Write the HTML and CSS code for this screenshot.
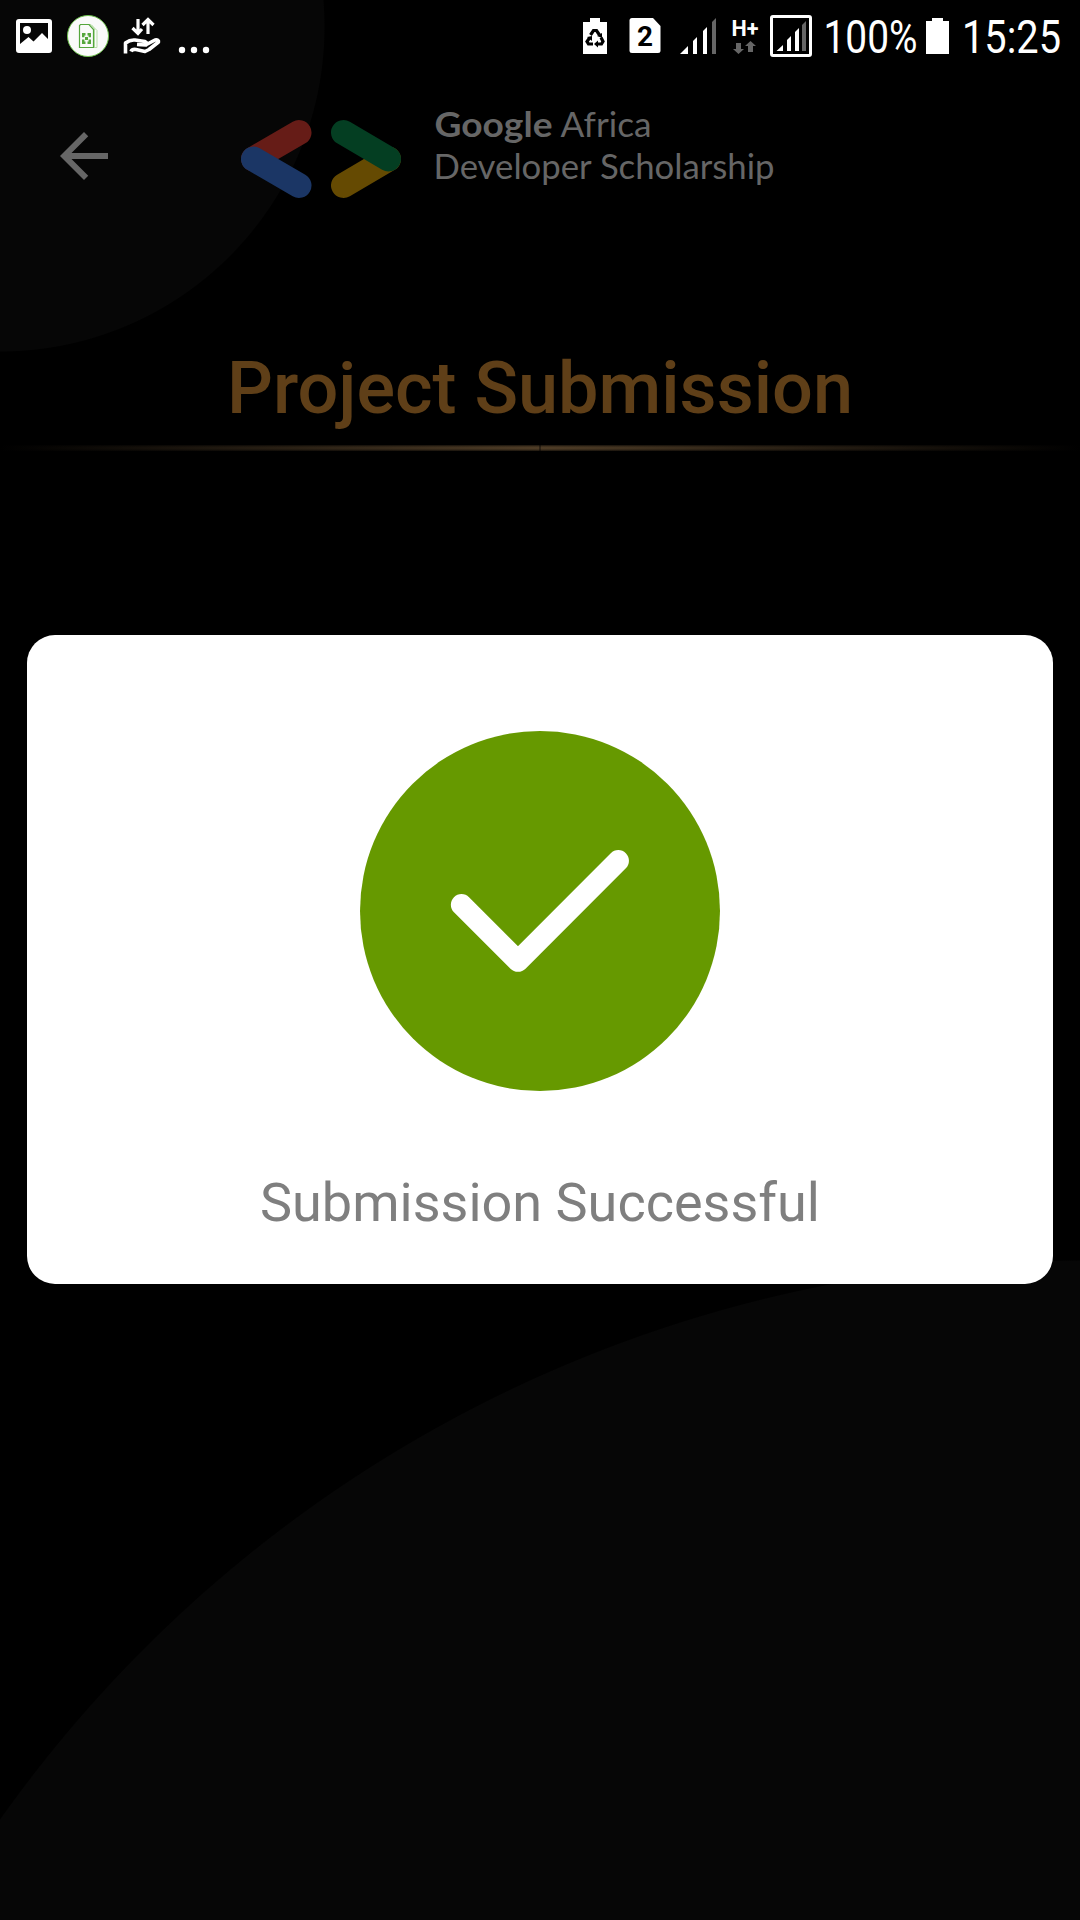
FILE: index.html
```html
<!DOCTYPE html>
<html lang="en">
<head>
<meta charset="utf-8">
<title>Project Submission</title>
<link rel="stylesheet" href="styles.css">
</head>
<body>
<div class="screen">
  <div class="status">
    <div class="status-group">
      <svg width="60" height="72" viewBox="0 0 60 72"><path fill="#fff" fill-rule="evenodd" d="M19 19H49Q52 19 52 22V50Q52 53 49 53H19Q16 53 16 50V22Q16 19 19 19ZM20 23V44L28.500 37L33.500 41.500L42 33L48 39V23Z"/><circle cx="27" cy="30" r="4" fill="#fff"/></svg>
      <svg width="56" height="72" viewBox="60 0 56 72"><circle cx="88" cy="36" r="20.500" fill="#fafafa" stroke="#6cbf4b"/><path fill="none" stroke="#b9dfaa" d="M89 24.500h2l6 6V47.500h-4M91.500 25l3 4V47"/><path fill="none" stroke="#55a63c" stroke-width="1.200" d="M80.500 24.500h8.500l4.500 5V47.500H79.500V25.500z"/><g fill="none" stroke="#55a63c" stroke-width="2.400"><path d="M85.500 34.200h-2.300v3M87.500 34.200h2.300v3M83.200 39.500v3.300h2.300M89.800 39.500v3.300h-2.300"/></g><path d="M85 37h3v3h-3z" fill="#55a63c"/></svg>
      <svg width="52" height="72" viewBox="116 0 52 72"><path fill="none" stroke="#fff" stroke-width="3.200" d="M138 19V32M132.500 28L138 33.500L142 29M148 34V20M142.500 25L148 19.500L153.500 25"/><path fill="none" stroke="#fff" stroke-width="3.600" stroke-linejoin="round" d="M125.500 53.500V43Q130 39.500 135 40L145 41.500Q148 43 146 45L137 44.500M146.500 44.500L155 40Q159 39.500 158.500 42L149 49.500L145 51.500L136 49.500Q132 49 131 51.500"/></svg>
      <svg width="52" height="72" viewBox="168 0 52 72"><g fill="#fff"><circle cx="182" cy="50" r="3.200"/><circle cx="194" cy="50" r="3.200"/><circle cx="206" cy="50" r="3.200"/></g></svg>
    </div>
    <div class="status-group">
      <svg width="43" height="72" viewBox="575 0 43 72"><path fill="#fff" d="M590 18h10v4h7V54H583V22h7z"/><g fill="none" stroke="#000" stroke-width="3.200"><path d="M590.500 35L593.500 30.500H596.500L599.500 35M601 37.500L603 41.500L601.500 44H597M593 44H588.500L587 41.500L589.500 38"/></g><path d="M602 33v5l-5-2zM598 40.500v7l-4-3.500zM587 37l5-1v5z"/></svg>
      <svg width="52" height="72" viewBox="618 0 52 72"><path fill="#fff" d="M632 18H653L660.500 26V50.500Q660.500 53 658 53H632Q629.500 53 629.500 50.500V20.500Q629.500 18 632 18Z"/><text x="637" y="46" class="sim-number" textLength="16" lengthAdjust="spacingAndGlyphs">2</text></svg>
      <svg width="54" height="72" viewBox="670 0 54 72"><path fill="#fff" d="M680 54L688 46V54ZM693 41L697 37V54H693ZM703 31L707 27V54H703Z"/><path fill="#666" d="M712 22L716 18V54H712Z"/></svg>
      <svg width="40" height="72" viewBox="724 0 40 72"><text x="731.500" y="36" class="network" textLength="27" lengthAdjust="spacingAndGlyphs">H+</text><path fill="#666" d="M736 43h5v6h3l-5.500 5-5.500-5h3zM748 52h5v-6h3l-5.500-5-5.500 5h3z"/></svg>
      <svg width="54" height="72" viewBox="764 0 54 72"><rect x="771.500" y="16.500" width="39" height="39" rx="1.500" fill="none" stroke="#fff" stroke-width="3"/><path fill="#fff" d="M776.500 51L783 45V51ZM787 40L791 36V51H787ZM795 32L799 28V51H795Z"/><path fill="#666" d="M802 25L806 21V51H802Z"/></svg>
      <svg width="104" height="72" viewBox="818 0 104 72"><text x="823.500" y="53" class="status-text" textLength="94" lengthAdjust="spacingAndGlyphs">100%</text></svg>
      <svg width="34" height="72" viewBox="922 0 34 72"><path fill="#fff" d="M932 18h11v3h6V54H926V21h6z"/></svg>
      <svg width="124" height="72" viewBox="956 0 124 72"><text x="962" y="53" class="status-text" textLength="99" lengthAdjust="spacingAndGlyphs">15:25</text></svg>
    </div>
  </div>
  <header class="header">
    <svg class="back" width="72" height="72" viewBox="0 0 24 24"><path fill="#666" d="M20 11H7.830l5.590-5.590L12 4l-8 8 8 8 1.410-1.410L7.830 13H20z"/></svg>
    <svg class="logo" width="160" height="78" viewBox="241 120 160 78"><g fill="none" stroke-width="25" stroke-linecap="round"><path stroke="#661c17" d="M253.500 159L299 132.500"/><path stroke="#1b3665" d="M253.500 159L299 185.500"/><path stroke="#654a02" d="M388.500 159L343.500 185.500"/><path stroke="#043e22" d="M343.500 132.500L388.500 159"/></g></svg>
    <svg class="brand" width="350" height="96" viewBox="430 100 350 96"><text x="434.500" y="136.700" class="brand-text brand-bold" textLength="118" lengthAdjust="spacingAndGlyphs">Google</text><text x="560.500" y="136.700" class="brand-text" textLength="91" lengthAdjust="spacingAndGlyphs">Africa</text><text x="433.500" y="179" class="brand-text" textLength="341" lengthAdjust="spacingAndGlyphs">Developer Scholarship</text></svg>
  </header>
  <h1 class="title">Project Submission</h1>
  <div class="rule"></div>
  <main class="dialog">
    <svg width="360" height="360" viewBox="360 731 360 360"><circle cx="540" cy="911" r="180" fill="#669900"/><path fill="none" stroke="#fff" stroke-width="21.300" stroke-linecap="round" stroke-linejoin="round" d="M461.500 904.700L518 961.200L618.300 860.700"/></svg>
    <p class="message">Submission Successful</p>
  </main>
</div>
</body>
</html>
```
FILE: styles.css
```css
body {
  margin: 0;
  background: #000;
}

svg {
  overflow: visible;
}

.screen {
  box-sizing: border-box;
  display: flex;
  flex-direction: column;
  align-items: center;
  width: 1080px;
  height: 1920px;
  overflow: hidden;
  font-family: Roboto, "Liberation Sans", sans-serif;
  background:
    radial-gradient(circle at 0 27px, #060606 324px, transparent 325px),
    radial-gradient(circle at 1081px 2585px, #060606 1324px, transparent 1325px),
    #000;
}

.status,
.status-group {
  display: flex;
}

.status {
  justify-content: space-between;
  width: 100%;
  height: 72px;
}

.status-text {
  font-size: 46px;
  fill: #fff;
}

.sim-number {
  font-size: 27px;
  font-weight: 700;
}

.network {
  font-size: 22px;
  font-weight: 700;
  fill: #fff;
}

.header {
  box-sizing: border-box;
  display: flex;
  align-items: flex-start;
  width: 100%;
  height: 168px;
  padding: 28px 0 0 48px;
}

.back {
  margin-top: 20px;
}

.logo {
  margin: 20px 29px 0 121px;
}

.brand-text {
  font-family: Lato, Roboto, sans-serif;
  font-size: 35px;
  fill: #666;
}

.brand-bold {
  font-weight: 700;
}

.title {
  margin: 107px 0 0;
  font-size: 72px;
  font-weight: 500;
  line-height: 84px;
  color: #5f3f18;
}

.rule {
  width: 1080px;
  height: 6px;
  margin-top: 14px;
  background:
    linear-gradient(#000a, transparent 35% 65%, #000a),
    linear-gradient(90deg, transparent 539px, #0006 539px 541px, transparent 541px),
    linear-gradient(90deg, #000, #4e3c26 50%, #000);
}

.dialog {
  box-sizing: border-box;
  display: flex;
  flex-direction: column;
  align-items: center;
  width: 1026px;
  height: 649px;
  margin-top: 184px;
  padding-top: 96px;
  border-radius: 28px;
  background: #fff;
}

.message {
  margin: 80px 0 0;
  font-size: 54px;
  line-height: 64px;
  color: #7f7f7f;
}
```
